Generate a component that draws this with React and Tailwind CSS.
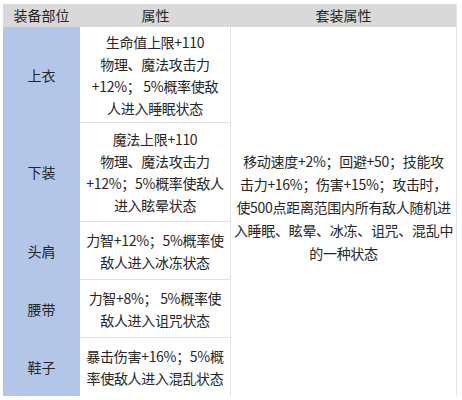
import React from "react";

const parts = [
  { name: "上衣", h: "h-[96px]", lines: ["生命值上限+110", "物理、魔法攻击力", "+12%； 5%概率使敌", "人进入睡眠状态"] },
  { name: "下装", h: "h-[99px]", lines: ["魔法上限+110", "物理、魔法攻击力", "+12%；5%概率使敌人", "进入眩晕状态"] },
  { name: "头肩", h: "h-[58px]", lines: ["力智+12%；5%概率使", "敌人进入冰冻状态"] },
  { name: "腰带", h: "h-[58px]", lines: ["力智+8%； 5%概率使", "敌人进入诅咒状态"] },
  { name: "鞋子", h: "h-[58px]", lines: ["暴击伤害+16%；5%概", "率使敌人进入混乱状态"] },
];

const setLines = [
  "移动速度+2%；回避+50；技能攻",
  "击力+16%；伤害+15%；攻击时，",
  "使500点距离范围内所有敌人随机进",
  "入睡眠、眩晕、冰冻、诅咒、混乱中",
  "的一种状态",
];

export default function App() {
  return (
    <div
      className="w-[462px] h-[400px] bg-white pt-[4px] pl-[3px] text-[14px] text-[#262626]"
      style={{ fontFamily: '"Microsoft YaHei", "Noto Sans CJK SC", sans-serif' }}
    >
      <div className="w-[454px] flex flex-col border-r border-[#e2e2e2]">
        {/* header */}
        <div className="flex h-[23px] bg-[#d9d9d9] leading-[23px]">
          <div className="w-[77px] text-center">装备部位</div>
          <div className="w-[151px] text-center">属性</div>
          <div className="flex-1 text-center">套装属性</div>
        </div>

        <div className="flex">
          <div className="w-[77px] flex flex-col bg-[#b4c6e7]">
            {parts.map((p) => (
              <div key={p.name} className={`${p.h} flex items-center justify-center`}>
                {p.name}
              </div>
            ))}
          </div>

          <div className="w-[151px] flex flex-col border-r border-[#e2e2e2]">
            {parts.map((p, i) => (
              <div
                key={p.name}
                className={`${p.h} flex flex-col items-center justify-center leading-[22px] whitespace-nowrap tracking-[-0.3px] ${
                  i < parts.length - 1 ? "border-b border-[#e2e2e2]" : ""
                }`}
              >
                {p.lines.map((l) => (
                  <div key={l}>{l}</div>
                ))}
              </div>
            ))}
          </div>

          <div className="flex-1 flex flex-col items-center justify-center leading-[23px] whitespace-nowrap tracking-[-0.3px] pb-[8px]">
            {setLines.map((l) => (
              <div key={l}>{l}</div>
            ))}
          </div>
        </div>
      </div>
    </div>
  );
}
